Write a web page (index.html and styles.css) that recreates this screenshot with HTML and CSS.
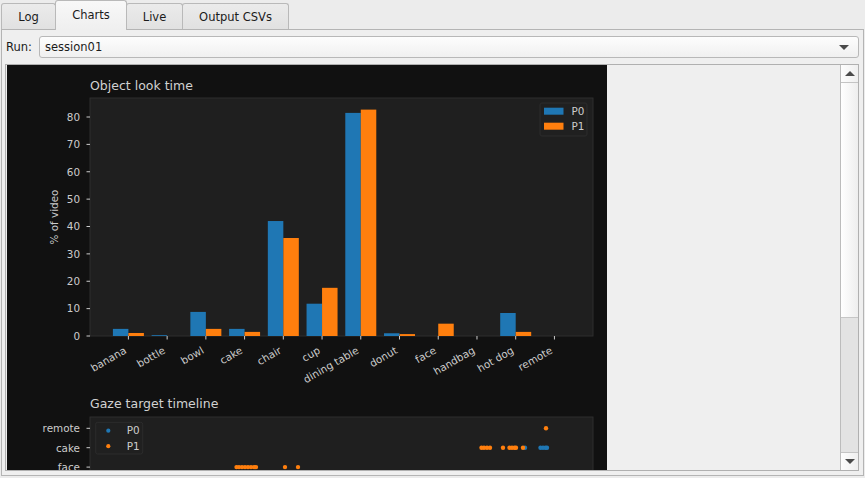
FILE: index.html
```html
<!DOCTYPE html>
<html>
<head>
  <meta charset="UTF-8">
  <title>Charts</title>
  <link rel="stylesheet" href="styles.css">
</head>
<body>
  <div class="tabs">
    <div class="tab tab-log">Log</div>
    <div class="tab tab-charts active">Charts</div>
    <div class="tab tab-live">Live</div>
    <div class="tab tab-csv">Output CSVs</div>
  </div>

  <div class="pane">
    <div class="run-row">
      <label>Run:</label>
      <div class="combo">
        <span>session01</span>
        <span class="combo-arrow"></span>
      </div>
    </div>

    <div class="scroll">
      <div class="viewport">
        <svg id="fig" class="figure" width="600" height="640"></svg>
      </div>
      <div class="vbar">
        <div class="sb-btn"><span class="arr-up"></span></div>
        <div class="sb-handle"></div>
        <div class="sb-track"></div>
        <div class="sb-btn sb-down"><span class="arr-down"></span></div>
      </div>
    </div>
  </div>

  <script>
    const NS = "http://www.w3.org/2000/svg";
    const fig = document.getElementById("fig");
    const BLUE = "#1f77b4";
    const ORANGE = "#ff7f0e";
    const TXT = "#cccccc";

    function el(tag, attrs, text) {
      const e = document.createElementNS(NS, tag);
      for (const k in attrs) e.setAttribute(k, attrs[k]);
      if (text !== undefined) e.textContent = text;
      fig.appendChild(e);
      return e;
    }

    // figure background
    el("rect", { x: 0, y: 0, width: 600, height: 640, fill: "#111111" });

    // ---- bar chart: object look time ----
    const cats = ["banana", "bottle", "bowl", "cake", "chair", "cup", "dining table",
                  "donut", "face", "handbag", "hot dog", "remote"];
    const p0 = [2.6, 0.3, 8.8, 2.6, 42.0, 11.8, 81.5, 1.0, 0, 0, 8.4, 0];
    const p1 = [1.1, 0, 2.6, 1.5, 35.8, 17.6, 82.7, 0.7, 4.5, 0, 1.5, 0];

    const ax = { x: 83, y: 33, w: 503, h: 238 };
    const yScale = v => ax.y + ax.h - v * 2.7375;
    const xPos = i => 121.4 + i * 38.73;
    const barW = 15.5;

    el("text", { x: 83, y: 25, class: "title" }, "Object look time");
    el("rect", { x: ax.x, y: ax.y, width: ax.w, height: ax.h, fill: "#1f1f1f", stroke: "#2f2f2f" });

    for (let v = 0; v <= 80; v += 10) {
      const y = yScale(v);
      el("line", { x1: 79.5, x2: 83, y1: y, y2: y, stroke: TXT });
      el("text", { x: 73, y: y + 3.8, class: "tick", "text-anchor": "end" }, v);
    }
    el("text", { x: 0, y: 0, class: "tick", "text-anchor": "middle",
                 transform: "translate(51,152) rotate(-90)" }, "% of video");

    cats.forEach((c, i) => {
      const cx = xPos(i);
      if (p0[i] > 0) el("rect", { x: cx - barW, y: yScale(p0[i]), width: barW, height: p0[i] * 2.7375, fill: BLUE });
      if (p1[i] > 0) el("rect", { x: cx, y: yScale(p1[i]), width: barW, height: p1[i] * 2.7375, fill: ORANGE });
      el("line", { x1: cx, x2: cx, y1: 271, y2: 274.5, stroke: TXT });
      el("text", { x: 0, y: 0, class: "tick", "text-anchor": "end",
                   transform: "translate(" + (cx - 1.2) + ",287.5) rotate(-30)" }, c);
    });

    // legend
    el("rect", { x: 533, y: 38, width: 47, height: 33, rx: 2, fill: "#202020", stroke: "#2c2c2c" });
    el("rect", { x: 537, y: 42.7, width: 19.5, height: 7, fill: BLUE });
    el("rect", { x: 537, y: 57.7, width: 19.5, height: 7, fill: ORANGE });
    el("text", { x: 564.5, y: 49.8, class: "tick" }, "P0");
    el("text", { x: 564.5, y: 64.8, class: "tick" }, "P1");

    // ---- timeline: gaze target (only the top rows are in view) ----
    el("text", { x: 83, y: 343, class: "title" }, "Gaze target timeline");
    el("rect", { x: 83, y: 352, width: 503, height: 240, fill: "#1f1f1f", stroke: "#2f2f2f" });

    const rows = ["remote", "cake", "face"];
    const rowY = i => 363.3 + i * 19.4;
    rows.forEach((r, i) => {
      const y = rowY(i);
      el("line", { x1: 79.5, x2: 83, y1: y, y2: y, stroke: TXT });
      el("text", { x: 73, y: y + 3.8, class: "tick", "text-anchor": "end" }, r);
    });

    // P0 first, P1 drawn on top
    const dotsP0 = [[518, 1], [533.5, 1], [536, 1], [538.5, 1], [540, 1]];
    const dotsP1 = [[539, 0],
      [474.5, 1], [477, 1], [480, 1], [483, 1], [496, 1], [502.5, 1], [505, 1], [507.5, 1], [509, 1], [516, 1],
      [229.5, 2], [232, 2], [235, 2], [238, 2], [241, 2], [244, 2], [247, 2], [249, 2], [278, 2], [291, 2]];
    dotsP0.forEach(d => el("circle", { cx: d[0], cy: rowY(d[1]), r: 2.2, fill: BLUE }));
    dotsP1.forEach(d => el("circle", { cx: d[0], cy: rowY(d[1]), r: 2.2, fill: ORANGE }));

    // legend
    el("rect", { x: 88.7, y: 357.3, width: 47, height: 31.7, rx: 2, fill: "#202020", stroke: "#2c2c2c" });
    el("circle", { cx: 101.3, cy: 365.7, r: 2.1, fill: BLUE });
    el("circle", { cx: 101.3, cy: 381.2, r: 2.1, fill: ORANGE });
    el("text", { x: 119.7, y: 369.3, class: "tick" }, "P0");
    el("text", { x: 119.7, y: 384.8, class: "tick" }, "P1");
  </script>
</body>
</html>
```

FILE: styles.css
```css
body {
  margin: 0;
  width: 865px;
  height: 478px;
  overflow: hidden;
  background: #ececec;
  font-family: "DejaVu Sans", sans-serif;
  font-size: 11.5px;
  color: #1b1b1b;
}

/* tab bar */
.tabs {
  display: flex;
  align-items: flex-end;
  height: 30px;
  padding-left: 1px;
  position: relative;
  z-index: 1;
}
.tab {
  box-sizing: border-box;
  height: 26px;
  margin-bottom: 1px;
  margin-left: -1px;
  border: 1px solid #b9b9b9;
  border-bottom: none;
  border-radius: 3px 3px 0 0;
  background: linear-gradient(#ebebeb, #e1e1e1);
  display: flex;
  align-items: center;
  justify-content: center;
}
.tab:first-child {
  margin-left: 0;
}
.tab.active {
  height: 30px;
  margin-bottom: 0;
  padding-bottom: 2px;
  background: linear-gradient(#f8f8f8, #efefef);
  position: relative;
  z-index: 2;
}
.tab-log { width: 55px; }
.tab-charts { width: 72px; }
.tab-live { width: 57px; }
.tab-csv { width: 107px; }

/* tab page */
.pane {
  box-sizing: border-box;
  width: 863px;
  height: 447px;
  margin: -1px 0 0 1px;
  border: 1px solid #b4b4b4;
  background: #efefef;
  padding: 6px 4px 4px 3px;
  display: flex;
  flex-direction: column;
}
.run-row {
  display: flex;
  align-items: center;
  height: 22px;
}
.run-row label {
  width: 33px;
  padding-left: 1px;
}
.combo {
  flex: 1;
  box-sizing: border-box;
  height: 22px;
  border: 1px solid #b8b8b8;
  border-radius: 3px;
  background: linear-gradient(#fdfdfd, #f0f0f0);
  display: flex;
  align-items: center;
  justify-content: space-between;
  padding: 0 9px 0 5px;
}
.combo-arrow {
  width: 0;
  height: 0;
  border-left: 5px solid transparent;
  border-right: 5px solid transparent;
  border-top: 5px solid #4a4a4a;
}

/* scroll area */
.scroll {
  flex: 1;
  margin-top: 6px;
  display: flex;
  box-sizing: border-box;
  border: 1px solid #b0b0b0;
  background: #efefef;
  overflow: hidden;
}
.viewport {
  flex: 1;
  overflow: hidden;
  padding-left: 1px;
}
.figure {
  display: block;
  font-family: "DejaVu Sans", sans-serif;
}
.figure .title {
  font-size: 12.5px;
  fill: #d2d2d2;
}
.figure .tick {
  font-size: 10.4px;
  fill: #cccccc;
}

.vbar {
  width: 17px;
  border-left: 1px solid #bcbcbc;
  background: #e4e4e4;
  display: flex;
  flex-direction: column;
}
.sb-btn {
  height: 17px;
  flex: none;
  background: linear-gradient(to right, #fdfdfd, #efefef);
  border-bottom: 1px solid #c4c4c4;
  display: flex;
  align-items: center;
  justify-content: center;
}
.sb-down {
  border-bottom: none;
  border-top: 1px solid #c4c4c4;
}
.sb-handle {
  height: 234px;
  flex: none;
  background: linear-gradient(to right, #ffffff, #eeeeee);
  border-bottom: 1px solid #c6c6c6;
}
.sb-track {
  flex: 1;
  background: #e3e3e3;
}
.arr-up,
.arr-down {
  width: 0;
  height: 0;
  border-left: 5px solid transparent;
  border-right: 5px solid transparent;
}
.arr-up {
  border-bottom: 5px solid #4a4a4a;
}
.arr-down {
  border-top: 5px solid #4a4a4a;
}
```
